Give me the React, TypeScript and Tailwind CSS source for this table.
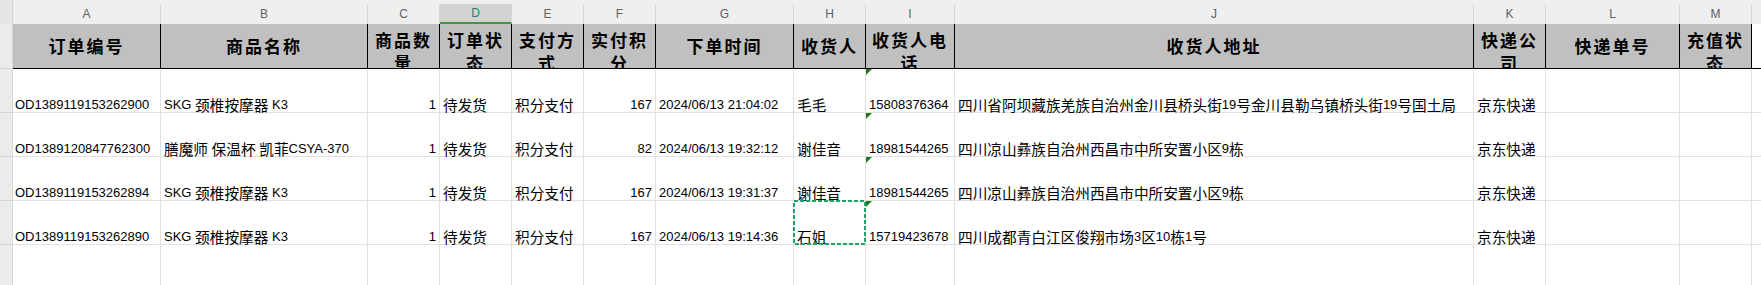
import React from "react";

interface Col {
    key: string;
    title: string;
    width: string;
    wrap?: boolean;
    align?: "left" | "right";
}

const cols: Col[] = [
    { key: "A", title: "订单编号", width: "w-[148px]" },
    { key: "B", title: "商品名称", width: "w-[207px]" },
    { key: "C", title: "商品数量", width: "w-[72px]", wrap: true, align: "right" },
    { key: "D", title: "订单状态", width: "w-[72px]", wrap: true },
    { key: "E", title: "支付方式", width: "w-[72px]", wrap: true },
    { key: "F", title: "实付积分", width: "w-[72px]", wrap: true, align: "right" },
    { key: "G", title: "下单时间", width: "w-[138px]" },
    { key: "H", title: "收货人", width: "w-[72px]" },
    { key: "I", title: "收货人电话", width: "w-[89px]", wrap: true },
    { key: "J", title: "收货人地址", width: "w-[519px]" },
    { key: "K", title: "快递公司", width: "w-[72px]", wrap: true },
    { key: "L", title: "快递单号", width: "w-[134px]" },
    { key: "M", title: "充值状态", width: "w-[72px]", wrap: true },
];

const rows: string[][] = [
    ["OD1389119153262900", "SKG 颈椎按摩器 K3", "1", "待发货", "积分支付", "167", "2024/06/13 21:04:02", "毛毛", "15808376364", "四川省阿坝藏族羌族自治州金川县桥头街19号金川县勒乌镇桥头街19号国土局", "京东快递", "", ""],
    ["OD1389120847762300", "膳魔师 保温杯 凯菲CSYA-370", "1", "待发货", "积分支付", "82", "2024/06/13 19:32:12", "谢佳音", "18981544265", "四川凉山彝族自治州西昌市中所安置小区9栋", "京东快递", "", ""],
    ["OD1389119153262894", "SKG 颈椎按摩器 K3", "1", "待发货", "积分支付", "167", "2024/06/13 19:31:37", "谢佳音", "18981544265", "四川凉山彝族自治州西昌市中所安置小区9栋", "京东快递", "", ""],
    ["OD1389119153262890", "SKG 颈椎按摩器 K3", "1", "待发货", "积分支付", "167", "2024/06/13 19:14:36", "石姐", "15719423678", "四川成都青白江区俊翔市场3区10栋1号", "京东快递", "", ""],
];

// latin runs in an Arial-width face, CJK runs slightly bigger like Excel does
function Txt({ s }: { s: string }) {
    const parts = s.match(/[\u3000-\u9fff\uff00-\uffef]+|[^\u3000-\u9fff\uff00-\uffef]+/g) ?? [];
    return (
        <>
            {parts.map((p, i) =>
                /[\u3000-\u9fff]/.test(p) ? (
                    <span key={i} className="font-['Noto_Sans_CJK_SC'] text-[14.67px]">{p}</span>
                ) : (
                    <span key={i} className="font-['Liberation_Sans'] text-[13px] whitespace-pre">{p}</span>
                )
            )}
        </>
    );
}

const TextFlag = () => (
    <svg width="6" height="6" viewBox="0 0 6 6" className="absolute left-0 top-0">
        <polygon points="0,0 6,0 0,6" fill="#1e7a1e" />
    </svg>
);

const CopyMarquee = () => (
    <svg width="73" height="45" className="absolute -left-[1px] -top-[1px] pointer-events-none">
        <rect x="1" y="1" width="71" height="43" fill="none" stroke="#1fa366" strokeWidth="2" strokeDasharray="4 2" />
    </svg>
);

export default function App() {
    return (
        <div className="w-[1761px] h-[285px] overflow-hidden bg-white text-black font-['Liberation_Sans','Noto_Sans_CJK_SC',sans-serif]">
            {/* column letters */}
            <div className="flex h-[24px] bg-[#efefef]">
                <div className="w-[13px] shrink-0 bg-[#e6e6e6] border-r border-[#d4d4d4]" />
                {cols.map((c) => (
                    <div key={c.key} className={`${c.width} shrink-0 flex flex-col justify-end`}>
                        <div
                            className={`h-[20px] flex items-center justify-center border-r border-[#d6d6d6] font-['Liberation_Sans'] text-[12px] ${
                                c.key === "D"
                                    ? "bg-[#d3d3d3] text-[#1d7f6a] border-b-2 border-b-[#3f9a37]"
                                    : "text-[#5f5f5f]"
                            }`}
                        >
                            {c.key}
                        </div>
                    </div>
                ))}
                <div className="flex-1" />
            </div>

            {/* header row */}
            <div className="flex h-[45px]">
                <div className="w-[13px] shrink-0 bg-[#ebebeb] border-r border-b border-[#d4d4d4]" />
                {cols.map((c) => (
                    <div
                        key={c.key}
                        className={`${c.width} shrink-0 overflow-hidden bg-[#c0c0c0] border-r border-b border-black flex justify-center text-center font-['Noto_Sans_CJK_SC'] font-bold text-[17px] tracking-[2px] ${
                            c.wrap ? "items-start pt-[4px] leading-[23px]" : "items-center leading-[22px]"
                        }`}
                    >
                        <span className="px-[1px]">{c.title}</span>
                    </div>
                ))}
                <div className="flex-1 border-b border-black" />
            </div>

            {/* body rows */}
            {[...rows, null].map((r, ri) => (
                <div key={ri} className="flex h-[44px]">
                    <div className="w-[13px] shrink-0 bg-[#ebebeb] border-r border-b border-[#d6d6d6]" />
                    {cols.map((c, ci) => (
                        <div
                            key={c.key}
                            className={`${c.width} shrink-0 relative border-r border-b border-[#e1e1e1] flex items-end px-[3px] leading-[14px] whitespace-nowrap ${
                                c.align === "right" ? "justify-end" : "justify-start"
                            } ${c.key === "A" ? "pl-[2px]" : ""}`}
                        >
                            {r && c.key === "I" && <TextFlag />}
                            {r && ri === 3 && c.key === "H" && <CopyMarquee />}
                            {r && r[ci] && <Txt s={r[ci]} />}
                        </div>
                    ))}
                    <div className="flex-1 border-b border-[#e1e1e1]" />
                </div>
            ))}
        </div>
    );
}
